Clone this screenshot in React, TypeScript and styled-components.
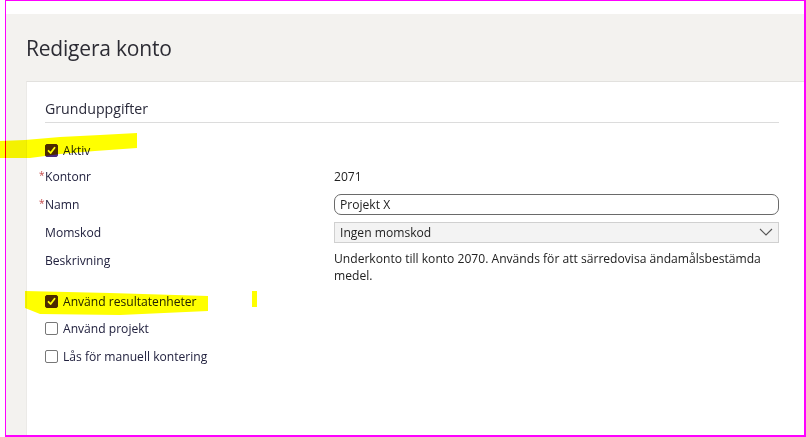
import * as React from "react";
import styled, {createGlobalStyle} from "styled-components";

const GlobalStyle = createGlobalStyle`
  html, body {
    margin: 0;
    padding: 0;
    background: #ffffff;
  }
  body {
    font-family: "Open Sans", "Noto Sans", sans-serif;
  }
`;

const Screen = styled.div`
  position: relative;
  width: 806px;
  height: 437px;
  overflow: hidden;
  background: #ffffff;
`;

const Frame = styled.div`
  margin-left: 5px;
  width: 801px;
  height: 437px;
  box-sizing: border-box;
  border-style: solid;
  border-color: #ff00ff;
  border-width: 1px 2px 2px 1px;
  padding-top: 13px;
  display: flex;
  flex-direction: column;
`;

const Panel = styled.div`
  flex: 1;
  background: #f3f2ef;
  display: flex;
  flex-direction: column;
  padding-left: 20px;
`;

const Header = styled.div`
  padding: 20px 0 19px 0;
`;

const Title = styled.h1`
  margin: 0;
  font-family: "Open Sans", sans-serif;
  font-weight: 400;
  font-size: 21px;
  line-height: 28px;
  color: #2c2c34;
  letter-spacing: -0.2px;
`;

const Card = styled.div`
  flex: 1;
  background: #ffffff;
  border-top: 1px solid #e2e1de;
  border-left: 1px solid #ebeae7;
  padding: 17px 25px 0 18px;
`;

const SectionTitle = styled.h2`
  margin: 0;
  font-family: "Open Sans", sans-serif;
  font-weight: 400;
  font-size: 14.2px;
  line-height: 20px;
  color: #2a2a3a;
  padding-bottom: 3px;
  border-bottom: 1px solid #dcdcdc;
`;

const CheckRow = styled.label`
  display: flex;
  align-items: center;
  gap: 5px;
  height: 21px;
  font-size: 12.1px;
  color: #22223f;
`;

const Box = styled.span<{ $checked?: boolean }>`
  width: 13px;
  height: 13px;
  box-sizing: border-box;
  border-radius: 2px;
  display: inline-flex;
  align-items: center;
  justify-content: center;
  background: ${p => (p.$checked ? "#4b2a82" : "#ffffff")};
  border: 1px solid ${p => (p.$checked ? "#4b2a82" : "#777777")};
  flex-shrink: 0;
`;

const TopCheck = styled.div`
  margin-top: 17px;
`;

const FormGrid = styled.div`
  margin-top: 4.5px;
  display: grid;
  grid-template-columns: 289px 1fr;
  row-gap: 7px;
`;

const Label = styled.div`
  font-size: 12.1px;
  line-height: 21px;
  color: #22223f;
`;

const Star = styled.span`
  display: inline-block;
  width: 6px;
  margin-left: -6px;
  font-size: 10px;
  color: #c24a4a;
  vertical-align: top;
  line-height: 19px;
`;

const Value = styled.div`
  font-size: 12.1px;
  line-height: 21px;
  color: #222222;
`;

const Description = styled.div`
  font-size: 12.1px;
  line-height: 17px;
  color: #222222;
`;

const TextInput = styled.div`
  height: 21px;
  box-sizing: border-box;
  border: 1px solid #6a6a6a;
  border-radius: 7px;
  padding: 0 5px;
  font-size: 12.1px;
  line-height: 19px;
  color: #222222;
`;

const Select = styled.div`
  height: 21px;
  box-sizing: border-box;
  border: 1px solid #d0d0d0;
  background: #f3f3f3;
  padding: 0 5px;
  font-size: 12.1px;
  line-height: 19px;
  color: #222222;
  display: flex;
  align-items: center;
  justify-content: space-between;
`;

const CheckList = styled.div`
  margin-top: 7px;
  display: flex;
  flex-direction: column;
  gap: 6.5px;
`;

const Marks = styled.svg`
  position: absolute;
  left: 0;
  top: 0;
  pointer-events: none;
  mix-blend-mode: multiply;
`;

function Check({checked, label}: { checked?: boolean, label: string }) {
    return <CheckRow>
        <Box $checked={checked}>
            {checked && <svg width="9" height="9" viewBox="0 0 9 9">
                <path d="M1.5 4.8 L3.6 7 L7.6 1.8" fill="none" stroke="#ffffff" strokeWidth="1.8"
                      strokeLinecap="round" strokeLinejoin="round"/>
            </svg>}
        </Box>
        {label}
    </CheckRow>;
}

function Chevron() {
    return <svg width="14" height="8" viewBox="0 0 14 8">
        <path d="M1 1 L7 7 L13 1" fill="none" stroke="#555" strokeWidth="1.1"/>
    </svg>;
}

export default function App() {
    return <Screen>
        <GlobalStyle/>
        <Frame>
            <Panel>
                <Header>
                    <Title>Redigera konto</Title>
                </Header>
                <Card>
                    <SectionTitle>Grunduppgifter</SectionTitle>
                    <TopCheck>
                        <Check checked label="Aktiv"/>
                    </TopCheck>
                    <FormGrid>
                        <Label><Star>*</Star>Kontonr</Label>
                        <Value>2071</Value>
                        <Label><Star>*</Star>Namn</Label>
                        <TextInput>Projekt X</TextInput>
                        <Label>Momskod</Label>
                        <Select>Ingen momskod<Chevron/></Select>
                        <Label>Beskrivning</Label>
                        <Description>
                            Underkonto till konto 2070. Används för att särredovisa ändamålsbestämda medel.
                        </Description>
                    </FormGrid>
                    <CheckList>
                        <Check checked label="Använd resultatenheter"/>
                        <Check label="Använd projekt"/>
                        <Check label="Lås för manuell kontering"/>
                    </CheckList>
                </Card>
            </Panel>
        </Frame>
        <Marks width="806" height="437" viewBox="0 0 806 437">
            <polygon points="0,141 25,140 60,137 100,135 137,133 137,148 95,151 60,154 30,158 0,158"
                     fill="#ffff00"/>
            <polygon points="25,291 110,293 208,296 208,311 120,315 40,314 25,308" fill="#ffff00"/>
            <rect x="252" y="291" width="5" height="16" fill="#ffff00"/>
        </Marks>
    </Screen>;
}
